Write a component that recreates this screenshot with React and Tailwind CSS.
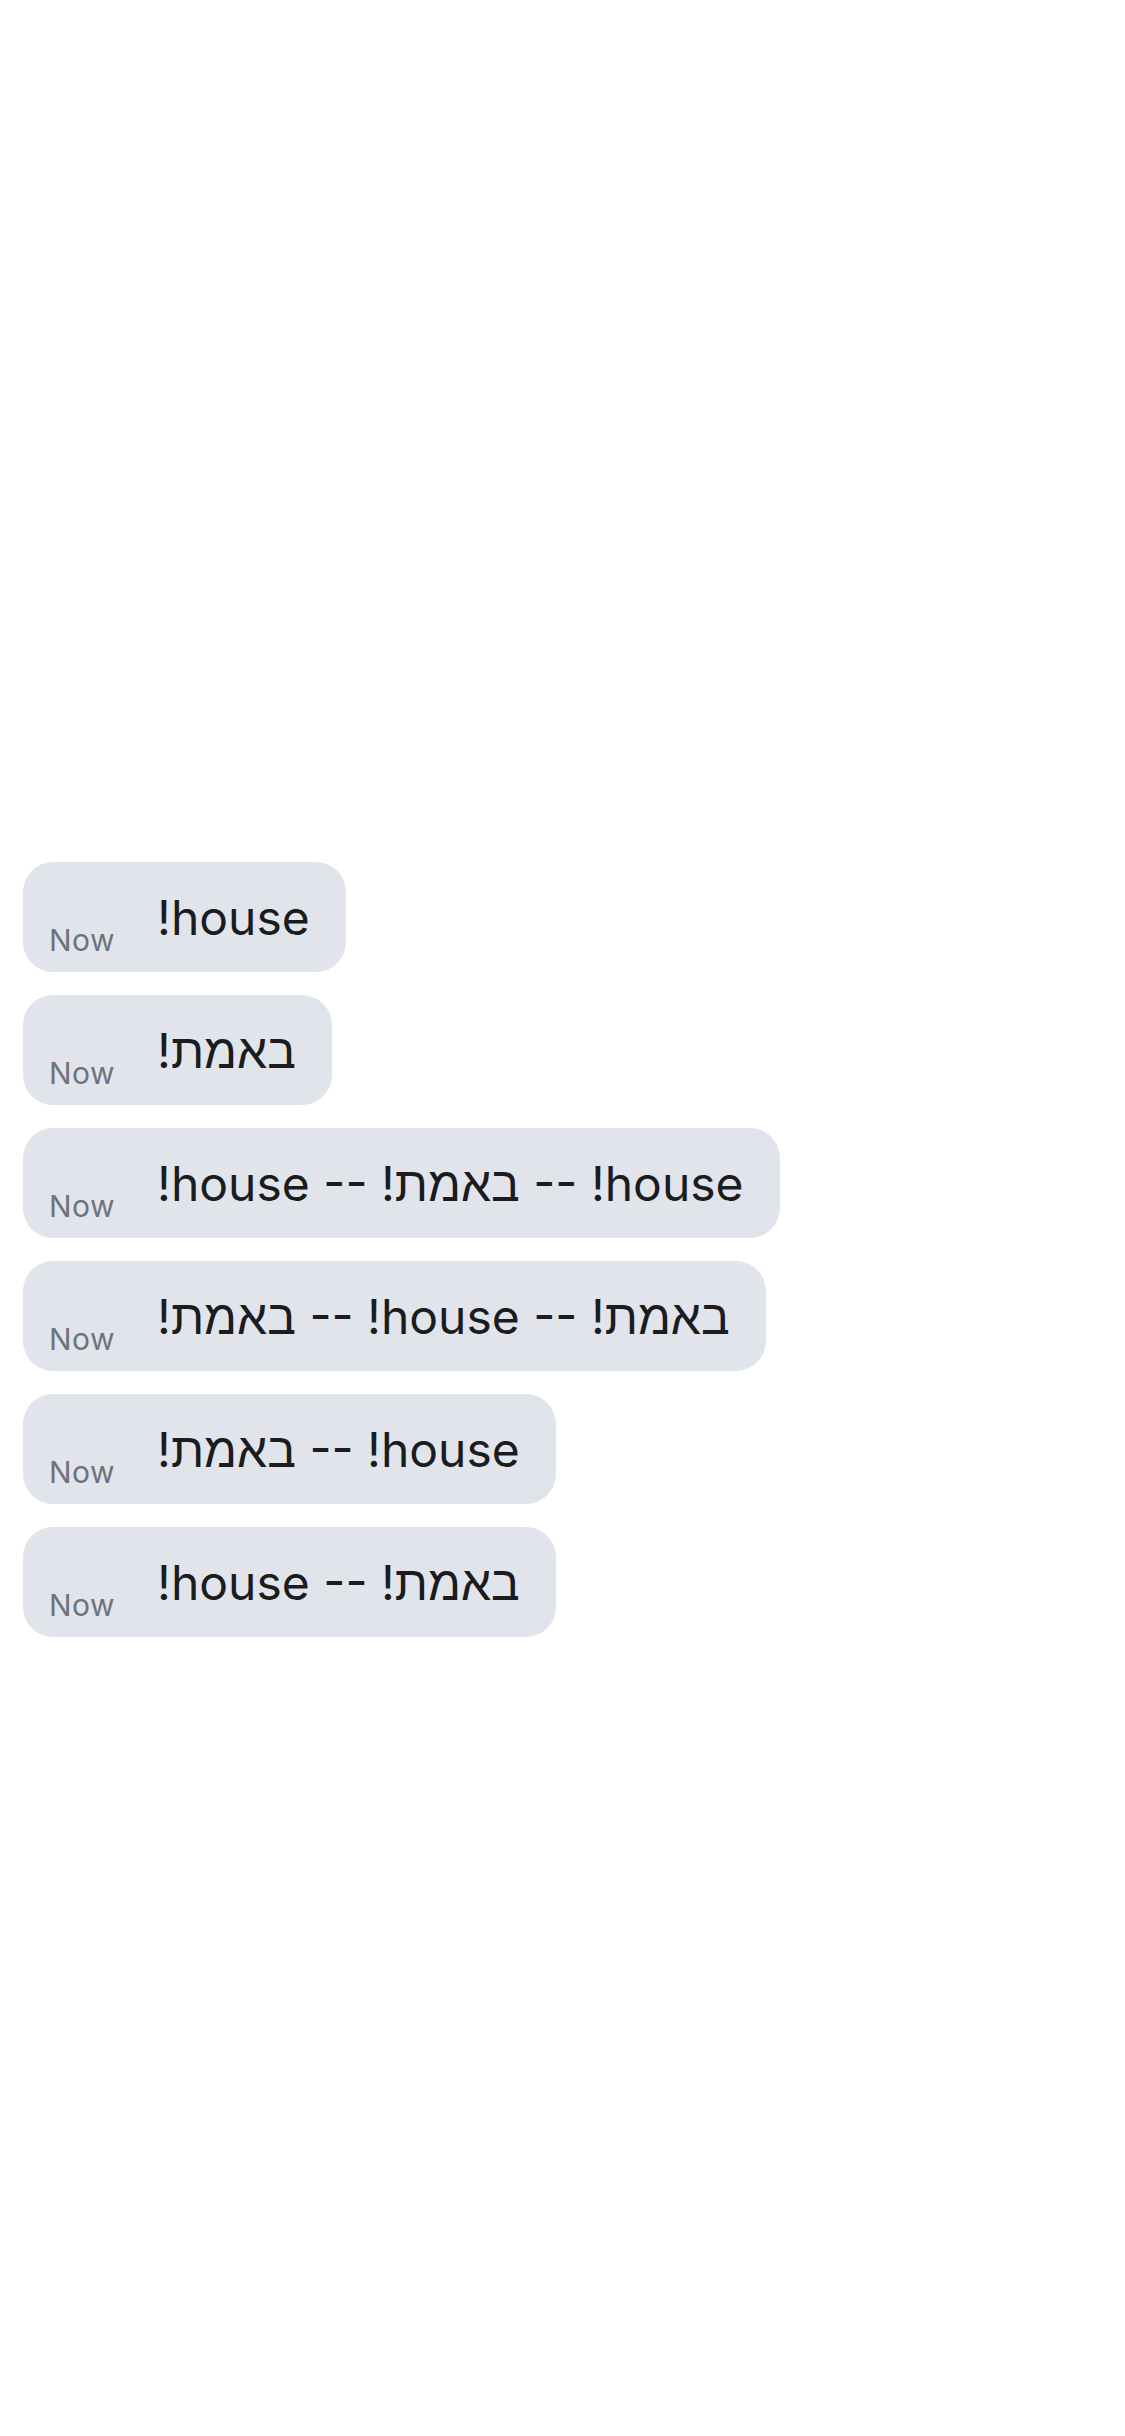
const messages = [
  "house!",
  "באמת!",
  "house! -- באמת! -- house!",
  "באמת! -- house! -- באמת!",
  "house! -- באמת!",
  "באמת! -- house!",
];

function Bubble({ text }) {
  return (
    <div className="flex items-end self-start rounded-[30px] bg-[#e1e5eb] pl-[26px] pr-[36px] pt-[26px] pb-[16px]">
      <span className="text-[30px] leading-[32px] text-[#6e737c] tracking-[0.5px]">Now</span>
      <span
        dir="rtl"
        className="ml-[42px] pb-[8px] text-[48px] leading-[60px] text-[#1b1c1f] whitespace-pre"
      >
        {text}
      </span>
    </div>
  );
}

export default function App() {
  return (
    <div
      className="min-h-[2436px] bg-white flex flex-col gap-[23px] px-[23px] pt-[862px]"
      style={{ fontFamily: '"Inter", "Liberation Sans", sans-serif' }}
    >
      {messages.map((m, i) => (
        <Bubble key={i} text={m} />
      ))}
    </div>
  );
}
